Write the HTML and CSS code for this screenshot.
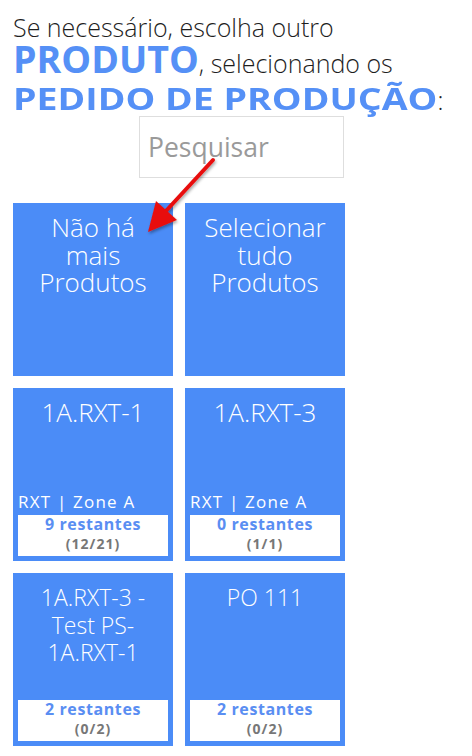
FILE: index.html
```html
<!DOCTYPE html>
<html lang="pt">
<head>
<meta charset="utf-8">
<title>Pedido de Produção</title>
<link rel="stylesheet" href="styles.css">
</head>
<body>
<div class="page">
  <h1 class="heading">
    <span class="line line-1">Se necessário, escolha outro</span>
    <span class="line line-2"><strong>PRODUTO</strong>, selecionando os</span>
    <span class="line line-3"><strong class="squat">PEDIDO DE PRODUÇÃO</strong>:</span>
  </h1>
  <div class="search-row">
    <input class="search" type="text" placeholder="Pesquisar">
  </div>
  <div class="grid">
    <div class="tile"><div class="title">Não há mais Produtos</div></div>
    <div class="tile"><div class="title">Selecionar tudo Produtos</div></div>
    <div class="tile">
      <div class="title">1A.RXT-1</div>
      <div class="loc">RXT | Zone A</div>
      <div class="count"><span class="left">9 restantes</span><span class="ratio">(12/21)</span></div>
    </div>
    <div class="tile">
      <div class="title">1A.RXT-3</div>
      <div class="loc">RXT | Zone A</div>
      <div class="count"><span class="left">0 restantes</span><span class="ratio">(1/1)</span></div>
    </div>
    <div class="tile">
      <div class="title small">1A.RXT-3 - Test PS-1A.RXT-1</div>
      <div class="count"><span class="left">2 restantes</span><span class="ratio">(0/2)</span></div>
    </div>
    <div class="tile">
      <div class="title small">PO 111</div>
      <div class="count"><span class="left">2 restantes</span><span class="ratio">(0/2)</span></div>
    </div>
  </div>
  <svg class="arrow" width="90" height="90" viewBox="0 0 90 90">
    <defs>
      <filter id="sh" x="-30%" y="-30%" width="160%" height="160%">
        <feDropShadow dx="1" dy="2" stdDeviation="1.5" flood-color="#000" flood-opacity="0.35"/>
      </filter>
    </defs>
    <g filter="url(#sh)">
      <line x1="78" y1="8" x2="30" y2="60" stroke="#e8100f" stroke-width="4" stroke-linecap="round"/>
      <polygon points="13,80 21,49 42,68" fill="#e8100f"/>
    </g>
  </svg>
</div>
</body>
</html>
```
FILE: styles.css
```css
html, body {
  margin: 0;
  padding: 0;
  background: #fff;
}
.page {
  position: relative;
  padding: 0 2px 0 13px;
  font-family: "Open Sans", "DejaVu Sans", sans-serif;
}
.heading {
  margin: 0;
  padding-top: 9px;
  height: 102px;
  font-size: 25px;
  font-weight: 300;
  color: #1e1e1e;
}
.line {
  display: block;
  line-height: 36px;
  white-space: nowrap;
}
.heading strong {
  font-size: 37.5px;
  line-height: 0;
  font-weight: 700;
  color: #5590f6;
}
.heading strong.squat {
  display: inline-block;
  line-height: 30px;
  transform: scaleY(0.8);
  transform-origin: 0 29.5px;
}
.search-row {
  display: flex;
  justify-content: center;
  margin-top: 5px;
}
.search {
  box-sizing: border-box;
  width: 205px;
  height: 62px;
  border: 1px solid #dedede;
  padding: 0 8px;
  font-family: "Open Sans", sans-serif;
  font-size: 26.5px;
  font-weight: 400;
  color: #555;
  outline: none;
}
.search::placeholder {
  color: #9a9a9a;
}
.grid {
  display: grid;
  grid-template-columns: 160px 160px;
  grid-auto-rows: 173px;
  gap: 12px;
  margin-top: 25px;
}
.tile {
  background: #4b8cf7;
  color: #fff;
  display: flex;
  flex-direction: column;
  padding: 0 5px 5px;
}
.title {
  padding: 11px 5px 0;
  font-size: 26px;
  line-height: 27.5px;
  font-weight: 300;
  text-align: center;
  flex: 1;
}
.title.small {
  font-size: 23px;
  line-height: 27.5px;
}
.loc {
  font-size: 17px;
  letter-spacing: 1.2px;
  line-height: 22px;
  font-weight: 400;
  padding-bottom: 2px;
  white-space: nowrap;
}
.count {
  box-sizing: border-box;
  background: #fff;
  height: 41px;
  display: flex;
  flex-direction: column;
  align-items: center;
}
.left {
  font-size: 16px;
  letter-spacing: 0.6px;
  font-weight: 700;
  line-height: 19px;
  color: #5a8ef2;
}
.ratio {
  font-size: 14px;
  letter-spacing: 1px;
  font-weight: 700;
  line-height: 20px;
  color: #777;
}
.arrow {
  position: absolute;
  left: 135px;
  top: 152px;
}
```
